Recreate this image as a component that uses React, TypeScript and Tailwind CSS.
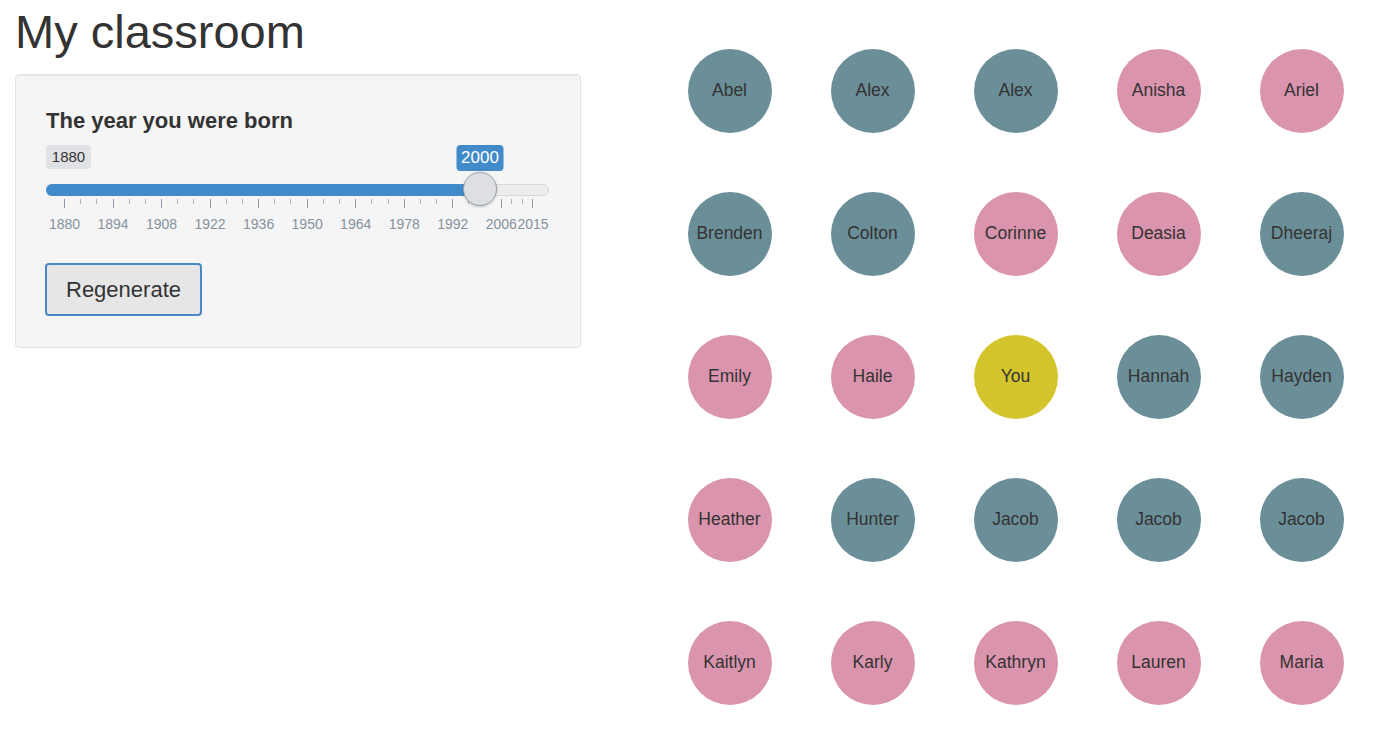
import React from 'react';

type Kid = { name: string; kind: 'boy' | 'girl' | 'you' };

const kids: Kid[] = [
  { name: 'Abel', kind: 'boy' },
  { name: 'Alex', kind: 'boy' },
  { name: 'Alex', kind: 'boy' },
  { name: 'Anisha', kind: 'girl' },
  { name: 'Ariel', kind: 'girl' },
  { name: 'Brenden', kind: 'boy' },
  { name: 'Colton', kind: 'boy' },
  { name: 'Corinne', kind: 'girl' },
  { name: 'Deasia', kind: 'girl' },
  { name: 'Dheeraj', kind: 'boy' },
  { name: 'Emily', kind: 'girl' },
  { name: 'Haile', kind: 'girl' },
  { name: 'You', kind: 'you' },
  { name: 'Hannah', kind: 'boy' },
  { name: 'Hayden', kind: 'boy' },
  { name: 'Heather', kind: 'girl' },
  { name: 'Hunter', kind: 'boy' },
  { name: 'Jacob', kind: 'boy' },
  { name: 'Jacob', kind: 'boy' },
  { name: 'Jacob', kind: 'boy' },
  { name: 'Kaitlyn', kind: 'girl' },
  { name: 'Karly', kind: 'girl' },
  { name: 'Kathryn', kind: 'girl' },
  { name: 'Lauren', kind: 'girl' },
  { name: 'Maria', kind: 'girl' },
];

const bubbleColor = {
  boy: 'bg-[#6b8f99]',
  girl: 'bg-[#db94ad]',
  you: 'bg-[#d4c52c]',
};

// slider geometry (px, relative to the slider box)
const X0 = 18;
const PX_PER_YEAR = 468 / 135;
const xOf = (year: number) => X0 + (year - 1880) * PX_PER_YEAR;

const majors = [1880, 1894, 1908, 1922, 1936, 1950, 1964, 1978, 1992, 2006, 2015];

function YearSlider() {
  const value = 2000;
  const handleX = xOf(value);

  const minors: number[] = [];
  for (let i = 0; i < majors.length - 1; i++) {
    const a = xOf(majors[i]);
    const b = xOf(majors[i + 1]);
    minors.push(a + (b - a) / 3, a + (2 * (b - a)) / 3);
  }

  return (
    <div className="relative w-[503px] h-[92px] mt-[11px]">
      {/* min label */}
      <div className="absolute left-0 top-0 w-[45px] h-[24px] rounded-[4px] bg-[#e1e2e5] text-[15px] leading-[24px] text-center text-[#333]">
        1880
      </div>
      {/* value tooltip */}
      <div
        className="absolute top-0 w-[47px] h-[26px] -translate-x-1/2 rounded-[4px] bg-[#428bca] text-[17px] leading-[26px] text-center text-white"
        style={{ left: handleX }}
      >
        2000
      </div>

      {/* track */}
      <div className="absolute left-0 top-[39px] w-[503px] h-[12px] rounded-full bg-[#ededed] border border-[#d8d8d8]" />
      <div
        className="absolute left-0 top-[39px] h-[12px] rounded-l-full bg-[#428bca]"
        style={{ width: handleX }}
      />

      {/* grid */}
      {majors.map((y) => (
        <div
          key={'t' + y}
          className="absolute top-[54px] w-px h-[9px] bg-[#8d99a4]"
          style={{ left: Math.round(xOf(y)) }}
        />
      ))}
      {minors.map((x, i) => (
        <div
          key={'m' + i}
          className="absolute top-[54px] w-px h-[5px] bg-[#c2aebb]"
          style={{ left: Math.round(x) }}
        />
      ))}
      {majors.map((y) => (
        <div
          key={'l' + y}
          className="absolute top-[71px] -translate-x-1/2 text-[14px] leading-[16px] text-[#86919c]"
          style={{ left: y === 2015 ? 487 : xOf(y) + 0.5 }}
        >
          {y}
        </div>
      ))}

      {/* handle */}
      <div
        className="absolute top-[27px] w-[34px] h-[34px] -translate-x-1/2 rounded-full bg-[#dedfe2] border border-[#9aa3b0] shadow-[0_1px_3px_rgba(0,0,0,0.2)]"
        style={{ left: handleX }}
      />
    </div>
  );
}

export default function App() {
  return (
    <div className="min-h-screen bg-white flex items-start font-['Liberation_Sans',Arial,sans-serif] text-[#333]">
      {/* Sidebar */}
      <div className="w-[581px] shrink-0 pl-[15px]">
        <h1 className="mt-[6px] text-[47px] leading-[1.1] font-normal text-[#333]">My classroom</h1>

        <div className="mt-[16px] w-[566px] rounded-[4px] border border-[#e3e3e3] bg-[#f5f5f5] shadow-[inset_0_1px_1px_rgba(0,0,0,0.05)] pt-[33px] pb-[31px] pl-[30px]">
          <label className="block h-[26px] text-[22px] leading-[26px] font-bold text-[#333]">
            The year you were born
          </label>

          <YearSlider />

          <button className="mt-[26px] -ml-px w-[157px] h-[53px] rounded-[4px] border-2 border-[#4a87c5] bg-[#e6e6e6] text-[22px] text-[#333]">
            Regenerate
          </button>
        </div>
      </div>

      {/* Classroom */}
      <div className="ml-[77px] pt-[19px] grid grid-cols-[repeat(5,143px)] auto-rows-[143px]">
        {kids.map((k, i) => (
          <div key={i} className="flex items-center justify-center">
            <div
              className={`w-[84px] h-[84px] rounded-full flex items-center justify-center whitespace-nowrap text-[17.5px] text-[#333] ${bubbleColor[k.kind]}`}
            >
              {k.name}
            </div>
          </div>
        ))}
      </div>
    </div>
  );
}
